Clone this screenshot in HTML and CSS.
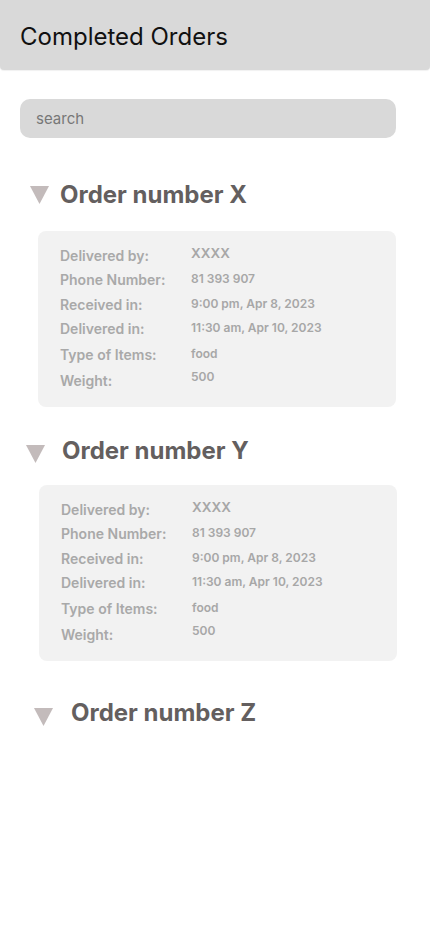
FILE: index.html
```html
<!DOCTYPE html>
<html lang="en">
<head>
<meta charset="utf-8">
<title>Completed Orders</title>
<link rel="stylesheet" href="styles.css">
</head>
<body>
<header class="topbar"><h1 class="topbar-title">Completed Orders</h1></header>
<div class="search"><span class="search-text">search</span></div>

<section class="order order--x">
  <div class="order-head">
    <svg class="arrow" width="19" height="18" viewBox="0 0 19 18"><polygon points="0,0 19,0 9.5,18" /></svg>
    <h2 class="order-title">Order number X</h2>
  </div>
  <div class="card">
    <div class="row"><span class="label">Delivered by:</span><span class="value value--big">XXXX</span></div>
    <div class="row"><span class="label">Phone Number:</span><span class="value">81 393 907</span></div>
    <div class="row"><span class="label">Received in:</span><span class="value">9:00 pm, Apr 8, 2023</span></div>
    <div class="row"><span class="label">Delivered in:</span><span class="value">11:30 am, Apr 10, 2023</span></div>
    <div class="row row--tall"><span class="label">Type of Items:</span><span class="value">food</span></div>
    <div class="row row--tall"><span class="label">Weight:</span><span class="value value--up">500</span></div>
  </div>
</section>

<section class="order order--y">
  <div class="order-head">
    <svg class="arrow" width="19" height="18" viewBox="0 0 19 18"><polygon points="0,0 19,0 9.5,18" /></svg>
    <h2 class="order-title">Order number Y</h2>
  </div>
  <div class="card">
    <div class="row"><span class="label">Delivered by:</span><span class="value value--big">XXXX</span></div>
    <div class="row"><span class="label">Phone Number:</span><span class="value">81 393 907</span></div>
    <div class="row"><span class="label">Received in:</span><span class="value">9:00 pm, Apr 8, 2023</span></div>
    <div class="row"><span class="label">Delivered in:</span><span class="value">11:30 am, Apr 10, 2023</span></div>
    <div class="row row--tall"><span class="label">Type of Items:</span><span class="value">food</span></div>
    <div class="row row--tall"><span class="label">Weight:</span><span class="value value--up">500</span></div>
  </div>
</section>

<section class="order order--z">
  <div class="order-head">
    <svg class="arrow" width="19" height="18" viewBox="0 0 19 18"><polygon points="0,0 19,0 9.5,18" /></svg>
    <h2 class="order-title">Order number Z</h2>
  </div>
</section>
</body>
</html>
```

FILE: styles.css
```css
* { box-sizing: border-box; }
html, body { margin: 0; padding: 0; background: #ffffff; }
body {
  width: 430px;
  font-family: Inter, "Liberation Sans", Arial, sans-serif;
}
.topbar {
  height: 70px;
  background: #d9d9d9;
  border-radius: 0 0 4px 4px;
  display: flex;
  align-items: center;
  padding: 3px 0 0 20px;
  box-shadow: 0 1px 1px rgba(0,0,0,0.06);
}
.topbar-title {
  margin: 0;
  font-size: 24px;
  font-weight: 400;
  color: #111111;
}
.search {
  margin: 29px 0 0 20px;
  width: 376px;
  height: 39px;
  border-radius: 10px;
  background: #d9d9d9;
  display: flex;
  align-items: center;
  padding-left: 16px;
}
.search-text {
  font-size: 15px;
  color: #777777;
}
.order-head {
  display: flex;
  align-items: center;
  height: 28px;
}
.arrow { flex: none; }
.arrow polygon { fill: #c3bbbb; }
.order-title {
  margin: 0;
  font-size: 24px;
  font-weight: 700;
  color: #645f5f;
  line-height: 28px;
}
.order--x { margin-top: 43px; }
.order--x .order-head { padding-left: 30px; gap: 11px; }
.order--x .card { margin: 22px 0 0 38px; }
.order--y { margin-top: 30px; }
.order--y .order-head { padding-left: 26px; gap: 17px; }
.order--y .arrow { margin-top: 6px; }
.order--y .card { margin: 20px 0 0 39px; }
.order--z { margin-top: 38px; }
.order--z .order-head { padding-left: 34px; gap: 18px; }
.order--z .arrow { margin-top: 8px; }
.card {
  width: 358px;
  background: #f2f2f2;
  border-radius: 8px;
  padding: 12px 0 14px 22px;
  display: flex;
  flex-direction: column;
}
.row {
  display: flex;
  align-items: center;
  height: 24.5px;
}
.row--tall { height: 26px; }
.label {
  width: 131px;
  flex: none;
  font-size: 14px;
  font-weight: 600;
  color: #a9a9a9;
}
.value {
  font-size: 12px;
  font-weight: 600;
  color: #a7a7a7;
  margin-top: -2px;
}
.value--big { font-size: 13.5px; margin-top: -4px; }
.value--up { margin-top: -7px; }
```
